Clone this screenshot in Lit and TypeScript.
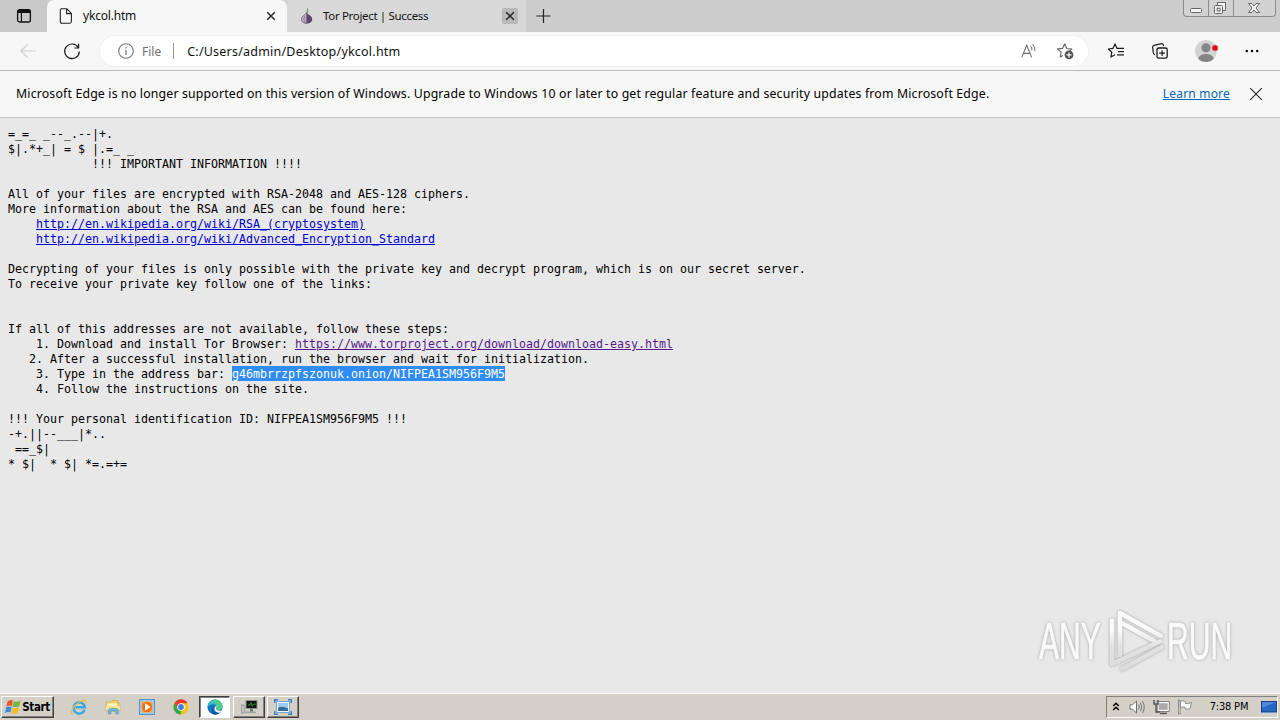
import { LitElement, css, html, nothing, svg } from 'lit'
import { customElement, property } from 'lit/decorators.js'

type Segment = string | { text: string; kind: 'link' | 'visited' | 'selected' }

const NOTE: Segment[][] = [
  ['=_=_ _--_.--|+.'],
  ['$|.*+_| = $ |.=_ _'],
  ['            !!! IMPORTANT INFORMATION !!!!'],
  [],
  ['All of your files are encrypted with RSA-2048 and AES-128 ciphers.'],
  ['More information about the RSA and AES can be found here:'],
  ['    ', { text: 'http://en.wikipedia.org/wiki/RSA_(cryptosystem)', kind: 'link' }],
  ['    ', { text: 'http://en.wikipedia.org/wiki/Advanced_Encryption_Standard', kind: 'link' }],
  [],
  ['Decrypting of your files is only possible with the private key and decrypt program, which is on our secret server.'],
  ['To receive your private key follow one of the links:'],
  [],
  [],
  ['If all of this addresses are not available, follow these steps:'],
  [
    '    1. Download and install Tor Browser: ',
    { text: 'https://www.torproject.org/download/download-easy.html', kind: 'visited' },
  ],
  ['   2. After a successful installation, run the browser and wait for initialization.'],
  ['    3. Type in the address bar: ', { text: 'g46mbrrzpfszonuk.onion/NIFPEA1SM956F9M5', kind: 'selected' }],
  ['    4. Follow the instructions on the site.'],
  [],
  ['!!! Your personal identification ID: NIFPEA1SM956F9M5 !!!'],
  ['-+.||--___|*..'],
  [' ==_$|'],
  ['* $|  * $| *=.=+='],
]

const icons = {
  tabActions: svg`
    <rect x="1.6" y="1.6" width="12.8" height="12.4" rx="2" fill="none" stroke="#111" stroke-width="1.3" />
    <path d="M1.5 5V3.2Q1.5 1.5 3.2 1.5H12.8Q14.5 1.5 14.5 3.2V5Z" fill="#111" />
    <path d="M5.4 5V14" stroke="#111" stroke-width="1.2" />`,
  page: svg`
    <path d="M3.6 .8H8.8L13.4 5.4V13.6Q13.4 15.2 11.8 15.2H3.9Q2.3 15.2 2.3 13.6V2.2Q2.3 .8 3.6 .8ZM8.6 1V5.6H13.2"
      fill="none" stroke="#222" stroke-width="1.1" />`,
  onion: svg`
    <path d="M8.2 .5Q9.6 2.6 7.6 5.2" fill="none" stroke="#7d9a62" stroke-width="1.3" />
    <path d="M7.7 4.4C7.3 6.5 2.4 7.2 2.4 11.2C2.4 14 4.8 15.6 7.8 15.6Z" fill="#b9aebf" stroke="#77667f" stroke-width=".8" />
    <path d="M7.7 4.4C8.3 6.5 13.2 7.2 13.2 11.2C13.2 14 10.8 15.6 7.6 15.6Z" fill="#5d4868" />
    <path d="M5.8 8.2Q3.8 11.4 6 14.6" fill="none" stroke="#84738d" stroke-width=".8" />`,
  close: svg`<path d="M4.2 4.2L11.8 11.8M11.8 4.2L4.2 11.8" stroke="#222" stroke-width="1.4" />`,
  plus: svg`<path d="M7.5 1V15M.5 8H14.5" stroke="#222" stroke-width="1.2" />`,
  back: svg`<path d="M16 8H.8M7.8 1.2L.8 8L7.8 14.8" fill="none" stroke="#cfcfcf" stroke-width="1.2" />`,
  refresh: svg`
    <path d="M14.3 4.6A7.3 7.3 0 1 0 15.3 8.4" fill="none" stroke="#1a1a1a" stroke-width="1.2" />
    <path d="M14.6 .8V5H10.4" fill="none" stroke="#1a1a1a" stroke-width="1.2" />`,
  info: svg`
    <circle cx="8" cy="8" r="7.3" fill="none" stroke="#777" stroke-width="1.1" />
    <path d="M8 7V12M8 4.2V5.6" stroke="#777" stroke-width="1.3" />`,
  readAloud: svg`
    <path d="M.8 14.4L5.7 2.2L10.6 14.4M2.4 10.4H9" fill="none" stroke="#707070" stroke-width="1.1" />
    <path d="M9.6 3.2Q11.3 4.8 10.9 7.4M11.6 1.2Q14.6 4 13.9 8.2" fill="none" stroke="#707070" stroke-width="1" />`,
  addFavorite: svg`
    <path d="M7.7 .8L9.8 5.5L14.9 6.1L12 8.6M5.8 12.5L3.2 14L4.1 9.1L.5 5.9L5.5 5.4L7.7 .8"
      fill="none" stroke="#666" stroke-width="1.1" stroke-linejoin="round" />
    <circle cx="12" cy="11.9" r="4.4" fill="#555" />
    <path d="M12 9.4V14.4M9.5 11.9H14.5" stroke="#fff" stroke-width="1.1" />`,
  favorites: svg`
    <path d="M8.9 5.2L7 .9L4.9 5.4L.3 6L3.8 9.2L2.9 14.1L7 11.7"
      fill="none" stroke="#1a1a1a" stroke-width="1.2" stroke-linejoin="round" />
    <path d="M8.5 5.4H16M10 8.6H16M9 11.8H16" stroke="#1a1a1a" stroke-width="1.2" />`,
  collections: svg`
    <rect x="5" y="5" width="10.2" height="10.2" rx="1.8" fill="none" stroke="#1a1a1a" stroke-width="1.3" />
    <path d="M10.1 7.2V13M7.2 10.1H13" stroke="#1a1a1a" stroke-width="1.2" />
    <path d="M3.1 11.8Q1.7 11.3 1.3 9.9L.6 4.3Q.5 2.7 2 2.3L9.4 .7Q11 .6 11.4 2.2L11.6 3.2"
      fill="none" stroke="#1a1a1a" stroke-width="1.2" />`,
  profile: svg`
    <circle cx="11" cy="11" r="11" fill="#d3d3d1" />
    <circle cx="11" cy="7.8" r="4.6" fill="#858585" />
    <path d="M3.2 18.7Q4.4 14 11 14Q17.6 14 18.8 18.7A11 11 0 0 1 3.2 18.7Z" fill="#858585" />
    <circle cx="20" cy="8" r="3.2" fill="#e00b1c" stroke="#f2dede" stroke-width=".6" />`,
  more: svg`<circle cx="2" cy="8" r="1.4" /><circle cx="8" cy="8" r="1.4" /><circle cx="14" cy="8" r="1.4" />`,
  dismiss: svg`<path d="M1.4 1.4L14.6 14.6M14.6 1.4L1.4 14.6" stroke="#222" stroke-width="1.2" />`,
  flag: svg`
    <path d="M2.6 2.6Q5 0 8 1.6L6.8 7.2Q4 5.8 1.2 7.8Z" fill="#e3572b" />
    <path d="M8.8 2Q11.6 3.6 15.8 1.2L14.4 7Q11 9.2 7.6 7.6Z" fill="#79b943" />
    <path d="M1 8.6Q3.8 6.6 6.6 8.1L5.4 13.6Q2.8 12.2 0 14.2Z" fill="#3b8ede" />
    <path d="M7.4 8.5Q10.6 10 14.2 7.9L12.8 13.4Q9.4 15.6 6.2 14Z" fill="#f8bd25" />`,
  explorer: svg`
    <path d="M13.6 10.7A5.6 5.6 0 1 1 13.8 8.2H4.5" fill="none" stroke="#3aa7e6" stroke-width="2.5" />
    <path d="M2 14.8Q-.6 15.6 .9 11.5Q3.3 5.3 11.1 1.8Q16.5-.3 14.6 4.4" fill="none" stroke="#f0bd3c" stroke-width="1.2" />`,
  folder: svg`
    <path d="M1 3H6L7 1.5H12.5V4H15V12H1Z" fill="#f1cf70" stroke="#cda640" stroke-width=".6" />
    <path d="M2.5 4.5H12V7H2.5Z" fill="#fff4bd" />
    <path d="M1 7H15V11H1Z" fill="#f7e39b" />
    <path d="M3.4 15V11.6Q3.4 9.4 5.6 9.4H11Q13.2 9.4 13.2 11.6V15H10.8V12H5.8V15Z" fill="#70b9e4" stroke="#3986b5" stroke-width=".5" />`,
  player: svg`
    <rect x=".6" y=".6" width="14.8" height="14.8" fill="#a9d0ee" stroke="#4a8cc7" />
    <rect x="2.6" y="2.6" width="10.8" height="10.8" fill="#f9a44a" />
    <circle cx="8" cy="8" r="5.2" fill="#ee7310" />
    <path d="M6 4.2L11.6 8L6 11.8Z" fill="#fff" />`,
  chrome: svg`
    <circle cx="8" cy="8" r="7.6" fill="#fbc116" />
    <path d="M1.4 4.2A7.6 7.6 0 0 1 14.6 4.2H8L5 9.8Z" fill="#e33b2e" />
    <path d="M1.4 4.2L5 9.9L8.6 11.4L7.4 15.6A7.6 7.6 0 0 1 1.4 4.2Z" fill="#2da94f" />
    <circle cx="8" cy="8" r="3.8" fill="#fff" />
    <circle cx="8" cy="8" r="2.9" fill="#3f7de8" />`,
  edge: svg`
    <circle cx="8" cy="8" r="7.6" fill="#1474c4" />
    <path d="M.5 7A7.6 7.6 0 0 1 15.6 7.8Q15.4 11.2 11.4 11.2Q9 11 9.7 8.8Q9.9 5.8 6.5 5.2Q2.6 5 .5 8Z" fill="#35bfc5" />
    <path d="M8 .4A7.6 7.6 0 0 1 15.6 7.8Q15.4 11.2 11.4 11.2Q9 11 9.7 8.8Q10.4 4.5 5 2.4Q6.4.5 8 .4Z" fill="#5bcf72" opacity=".75" />
    <path d="M6 8.2Q5.4 13.4 11 13.6Q13 13.4 14.2 12.6Q11.2 16.4 7 15.5Q3 12.6 6 8.2Z" fill="#0c4e9e" />
    <path d="M9.8 7.6Q8.4 10 10 11Q12.8 12.4 15.4 11.2V12.4Q12.8 14.1 10.4 13.5Q6.6 12 7.7 8.8Q8.4 6.7 9.8 7.6Z" fill="#fff" />`,
  monitor: svg`
    <rect x="5" y="1.5" width="11" height="8" fill="#111" stroke="#8c938c" />
    <path d="M7 6H9L10 3.5L11.2 7.4L12.4 5.2H15" fill="none" stroke="#31a238" stroke-width=".9" />
    <rect x=".5" y="6" width="2.6" height="8" fill="#c8cccf" stroke="#747c80" stroke-width=".6" />
    <path d="M4 12.4H15V14.2H4Z" fill="#a3aaa2" /><path d="M9 10H12V12.4H9Z" fill="#777" />`,
  viewer: svg`
    <rect x="2.6" y="2.6" width="12.8" height="10.8" fill="#fff" stroke="#6c9fca" />
    <rect x="4" y="4" width="10" height="8" fill="#9ccdf0" />
    <path d="M4 9Q8 6.5 14 9.4V12H4Z" fill="#346d96" />
    <path d="M.7 4V.8H4M14 .8H17.3V4M17.3 12V15.2H14M4 15.2H.7V12" fill="none" stroke="#3385cc" stroke-width="1.5" />`,
  chevrons: svg`<path d="M1.2 6L4 3.2L6.8 6M1.2 10L4 7.2L6.8 10" fill="none" stroke="#000" stroke-width="1.5" />`,
  speaker: svg`
    <path d="M1 5.8H3.5L7.5 2V14L3.5 10.2H1Z" fill="#fff" stroke="#6f6f6f" />
    <path d="M9.6 5.6Q11 8 9.6 10.4M11.5 3.8Q14 8 11.5 12.2M13.5 2Q17 8 13.5 14" fill="none" stroke="#777" />`,
  network: svg`
    <rect x="5" y="3.5" width="10.4" height="8" fill="#a9a9a9" stroke="#fff" stroke-width="1.4" />
    <rect x="4.2" y="2.7" width="12" height="9.6" fill="none" stroke="#555" stroke-width=".7" />
    <path d="M7 14.4H14" stroke="#555" stroke-width="1.6" />
    <path d="M1 1V5H5V1M3 5V13H7" fill="none" stroke="#555" stroke-width="1.4" />`,
  notice: svg`
    <path d="M2.2 15.2V.8" stroke="#666" stroke-width="2.4" />
    <path d="M2.2 14.6V1.4" stroke="#fff" stroke-width=".9" />
    <path d="M3.4 2.2Q6 1.4 8.4 2.6V4.4Q11 5.4 14.6 3.4L13 9.6Q10.6 10.8 8 9.6V8Q5.6 7.6 3.4 8.6Z" fill="#fff" stroke="#777" stroke-width=".8" />`,
  desktop: svg`
    <rect x=".5" y="2.5" width="15" height="10.5" fill="#2765c5" stroke="#19407d" />
    <path d="M1 3H15L1 9Z" fill="#4f88d8" /><path d="M1 14.5H15" stroke="#c3d7ef" stroke-width="1.2" />`,
}

@customElement('ui-icon')
export class UiIcon extends LitElement {
  @property() name: keyof typeof icons = 'page'
  @property() box = '0 0 16 16'

  static styles = css`
    :host {
      display: block;
      flex: none;
      width: 16px;
      height: 16px;
    }

    svg {
      display: block;
      width: 100%;
      height: 100%;
      overflow: visible;
    }
  `

  render() {
    return html`<svg viewBox=${this.box}>${icons[this.name]}</svg>`
  }
}

@customElement('browser-tabs')
export class BrowserTabs extends LitElement {
  static styles = css`
    :host {
      display: flex;
      height: 32px;
      flex: none;
      background: #cdcdcd;
      font: 12px/16px 'Noto Sans', sans-serif;
      color: #111;
    }

    .actions {
      width: 47px;
      box-sizing: border-box;
      padding: 8px 0 0 16px;
      background: #c9c9c9;
    }

    .tab {
      display: flex;
      align-items: center;
      box-sizing: border-box;
      height: 32px;
      padding-left: 11px;
      background: #d8d8d8;
    }

    .tab.active {
      width: 240px;
      border-radius: 7px 7px 0 0;
      background: #f7f7f7;
    }

    .tab.other {
      width: 239px;
      padding-left: 12px;
      padding-right: 8px;
    }

    .label {
      flex: 1;
      padding-left: 9px;
      letter-spacing: -0.2px;
    }

    .other .label {
      padding-left: 8px;
      font-size: 11.5px;
      letter-spacing: -0.33px;
    }

    .active .close {
      margin-right: 8px;
    }

    .other .close {
      background: #b9b9b9;
      border-radius: 2px;
    }

    .plus {
      margin: 8px 0 0 10px;
    }

    .controls {
      display: flex;
      margin: 0 4px 0 auto;
      box-sizing: border-box;
      height: 17px;
      border: 1px solid #8b8b8b;
      border-top: 0;
      border-radius: 0 0 4px 4px;
      background: #d2d2d2;
    }

    .controls svg {
      display: block;
      width: 24px;
      height: 16px;
      border-right: 1px solid #8b8b8b;
    }

    .controls svg.last {
      width: 41px;
      border: 0;
    }
  `

  render() {
    return html`
      <div class="actions"><ui-icon name="tabActions"></ui-icon></div>
      <div class="tab active">
        <ui-icon name="page"></ui-icon>
        <span class="label">ykcol.htm</span>
        <ui-icon class="close" name="close"></ui-icon>
      </div>
      <div class="tab other">
        <ui-icon name="onion"></ui-icon>
        <span class="label">Tor Project | Success</span>
        <ui-icon class="close" name="close"></ui-icon>
      </div>
      <ui-icon class="plus" name="plus"></ui-icon>
      <div class="controls">
        <svg viewBox="0 0 24 16">
          <rect x="6.5" y="8.5" width="11" height="4" rx="1" fill="#f3f3f3" stroke="#666" />
        </svg>
        <svg viewBox="0 0 24 16">
          <path d="M8.5 5.5V2.5H16.5V10.5H14" fill="#f3f3f3" stroke="#666" />
          <rect x="5.5" y="5.5" width="8" height="8" rx="1" fill="#f3f3f3" stroke="#666" />
          <rect x="8.2" y="8.2" width="2.8" height="2.8" fill="none" stroke="#666" />
        </svg>
        <svg class="last" viewBox="0 0 41 16">
          <path
            d="M14.5 3.5H18L20 6L22 3.5H25.5L22 8L25.5 12.5H22L20 10L18 12.5H14.5L18 8Z"
            fill="#f3f3f3"
            stroke="#666"
          />
        </svg>
      </div>
    `
  }
}

@customElement('browser-toolbar')
export class BrowserToolbar extends LitElement {
  static styles = css`
    :host {
      display: flex;
      align-items: center;
      flex: none;
      box-sizing: border-box;
      height: 39px;
      padding: 0 20px;
      background: #f7f7f7;
      border-bottom: 1px solid #bdbdbd;
      font: 12px/18px 'Noto Sans', sans-serif;
      color: #111;
    }

    .refresh {
      margin-left: 28px;
    }

    .address {
      display: flex;
      align-items: center;
      box-sizing: border-box;
      width: 988px;
      height: 30px;
      margin-left: 20px;
      padding: 0 15px 0 18px;
      border-radius: 15px;
      background: #fff;
      box-shadow: 0 0 0 1px #f1f1f1;
    }

    .scheme {
      padding: 1px 12px 0 8px;
      color: #707070;
    }

    .divider {
      width: 1px;
      height: 16px;
      background: #999;
    }

    .url {
      flex: 1;
      padding: 1px 0 0 13px;
      font-size: 12.5px;
      letter-spacing: 0.22px;
    }

    .read {
      margin-right: 20px;
    }

    .favorites {
      margin-left: 20px;
    }

    .collections {
      margin-left: 28px;
    }

    .profile {
      width: 22px;
      height: 22px;
      margin-left: 27px;
    }

    .more {
      width: 14px;
      height: 14px;
      margin-left: 28px;
    }
  `

  render() {
    return html`
      <ui-icon name="back"></ui-icon>
      <ui-icon class="refresh" name="refresh"></ui-icon>
      <div class="address">
        <ui-icon name="info"></ui-icon>
        <span class="scheme">File</span>
        <span class="divider"></span>
        <span class="url">C:/Users/admin/Desktop/ykcol.htm</span>
        <ui-icon class="read" name="readAloud"></ui-icon>
        <ui-icon name="addFavorite"></ui-icon>
      </div>
      <ui-icon class="favorites" name="favorites"></ui-icon>
      <ui-icon class="collections" name="collections"></ui-icon>
      <ui-icon class="profile" name="profile" box="0 0 22 22"></ui-icon>
      <ui-icon class="more" name="more"></ui-icon>
    `
  }
}

@customElement('support-banner')
export class SupportBanner extends LitElement {
  static styles = css`
    :host {
      display: flex;
      align-items: center;
      flex: none;
      box-sizing: border-box;
      height: 47px;
      padding: 0 17px 0 16px;
      background: #f7f7f7;
      border-bottom: 1px solid #c4c4c4;
      font: 12px/18px 'Noto Sans', sans-serif;
      color: #000;
    }

    .message {
      flex: 1;
      font-size: 12.3px;
      letter-spacing: 0.17px;
      white-space: nowrap;
    }

    .more {
      color: #0067b8;
      letter-spacing: 0.2px;
      text-decoration: underline;
    }

    .dismiss {
      width: 14px;
      height: 14px;
      margin-left: 19px;
    }
  `

  render() {
    return html`
      <span class="message"
        >Microsoft Edge is no longer supported on this version of Windows. Upgrade to Windows 10 or later to get
        regular feature and security updates from Microsoft Edge.</span
      >
      <span class="more">Learn more</span>
      <ui-icon class="dismiss" name="dismiss"></ui-icon>
    `
  }
}

@customElement('note-page')
export class NotePage extends LitElement {
  static styles = css`
    :host {
      display: block;
      position: relative;
      flex: 1;
      padding: 8px;
      background: #e8e8e8;
      color: #000;
    }

    .line {
      height: 15px;
      font: 11.64px/17px 'DejaVu Sans Mono', monospace;
      white-space: pre;
    }

    .link {
      color: #0000d0;
      text-decoration: underline;
    }

    .visited {
      color: #551a8b;
      text-decoration: underline;
    }

    .selected {
      display: inline-block;
      height: 15px;
      color: #fff;
      background: #2f8cf5;
    }

    .watermark {
      position: absolute;
      right: 40px;
      bottom: 14px;
      width: 208px;
      height: 76px;
      font-family: 'Liberation Sans', sans-serif;
      filter: drop-shadow(0 0 1.5px rgba(0, 0, 0, 0.3));
    }
  `

  private _segment(part: Segment) {
    if (typeof part === 'string') return part
    return html`<span class=${part.kind}>${part.text}</span>`
  }

  render() {
    return html`
      ${NOTE.map((line) => html`<div class="line">${line.length ? line.map((p) => this._segment(p)) : nothing}</div>`)}
      <svg class="watermark" viewBox="0 0 208 76">
        <defs>
          <linearGradient id="fade" gradientUnits="userSpaceOnUse" x1="0" y1="10" x2="0" y2="66">
            <stop offset=".3" stop-color="#fafafa" />
            <stop offset=".6" stop-color="#e2e2e2" />
            <stop offset="1" stop-color="#dcdcdc" />
          </linearGradient>
        </defs>
        <g fill="url(#fade)" stroke="url(#fade)" stroke-width=".7" font-size="51">
          <text transform="translate(7 56) scale(.59 1)">ANY</text>
          <text transform="translate(135 56) scale(.59 1)">RUN</text>
        </g>
        <g fill="none" stroke="url(#fade)" stroke-width="4.5" stroke-linecap="round" stroke-linejoin="round">
          <path d="M80 17.5V61L128 38.5" />
          <path d="M88 52V10L129 33" />
          <path d="M90 66L130 44" />
          <path d="M90 20L122 38" />
        </g>
      </svg>
    `
  }
}

@customElement('task-bar')
export class TaskBar extends LitElement {
  static styles = css`
    :host {
      display: flex;
      align-items: flex-start;
      flex: none;
      box-sizing: border-box;
      height: 27px;
      padding: 2px 2px 0 1px;
      background: #d4d0c8;
      border-top: 1px solid #fff;
      font: 11px/14px 'DejaVu Sans Condensed', 'DejaVu Sans', sans-serif;
      color: #000;
    }

    .start,
    .window {
      display: flex;
      align-items: center;
      justify-content: center;
      box-sizing: border-box;
      height: 22px;
      border: 1px solid;
      border-color: #fff #404040 #404040 #fff;
      box-shadow: inset -1px -1px #808080;
    }

    .start {
      gap: 1px;
      width: 53px;
      margin-right: 17px;
      font: bold 11.5px/14px 'DejaVu Sans Condensed', 'DejaVu Sans', sans-serif;
      letter-spacing: -0.4px;
    }

    .launch {
      margin: 3px 18px 0 0;
    }

    .launch.last {
      margin-right: 10px;
    }

    .window {
      width: 32px;
      margin-right: 2px;
    }

    .window.active {
      width: 31px;
      margin-right: 3px;
      background: #fff;
      border-color: #404040 #fff #fff #404040;
      box-shadow: inset 1px 1px #808080;
    }

    .wide {
      width: 18px;
    }

    .tray {
      display: flex;
      align-items: center;
      box-sizing: border-box;
      width: 172px;
      height: 22px;
      margin-left: auto;
      padding-left: 5px;
      border: 1px solid;
      border-color: #808080 #fff #fff #808080;
    }

    .chevrons {
      width: 8px;
      height: 14px;
      margin-right: 9px;
    }

    .tray .item {
      margin-right: 8px;
    }

    .clock {
      flex: 1;
      padding-right: 4px;
      text-align: center;
      letter-spacing: -0.2px;
      white-space: nowrap;
    }
  `

  render() {
    return html`
      <div class="start"><ui-icon name="flag"></ui-icon>Start</div>
      <ui-icon class="launch" name="explorer"></ui-icon>
      <ui-icon class="launch" name="folder"></ui-icon>
      <ui-icon class="launch" name="player"></ui-icon>
      <ui-icon class="launch last" name="chrome"></ui-icon>
      <div class="window active"><ui-icon name="edge"></ui-icon></div>
      <div class="window"><ui-icon name="monitor"></ui-icon></div>
      <div class="window"><ui-icon class="wide" name="viewer" box="0 0 18 16"></ui-icon></div>
      <div class="tray">
        <ui-icon class="chevrons" name="chevrons" box="0 0 8 14"></ui-icon>
        <ui-icon class="item" name="speaker"></ui-icon>
        <ui-icon class="item" name="network"></ui-icon>
        <ui-icon class="item" name="notice"></ui-icon>
        <span class="clock">7:38 PM</span>
        <ui-icon name="desktop"></ui-icon>
      </div>
    `
  }
}

@customElement('app-root')
export class AppRoot extends LitElement {
  static styles = css`
    :host {
      display: flex;
      flex-direction: column;
      width: 1280px;
      height: 720px;
      overflow: hidden;
    }
  `

  render() {
    return html`
      <browser-tabs></browser-tabs>
      <browser-toolbar></browser-toolbar>
      <support-banner></support-banner>
      <note-page></note-page>
      <task-bar></task-bar>
    `
  }
}
